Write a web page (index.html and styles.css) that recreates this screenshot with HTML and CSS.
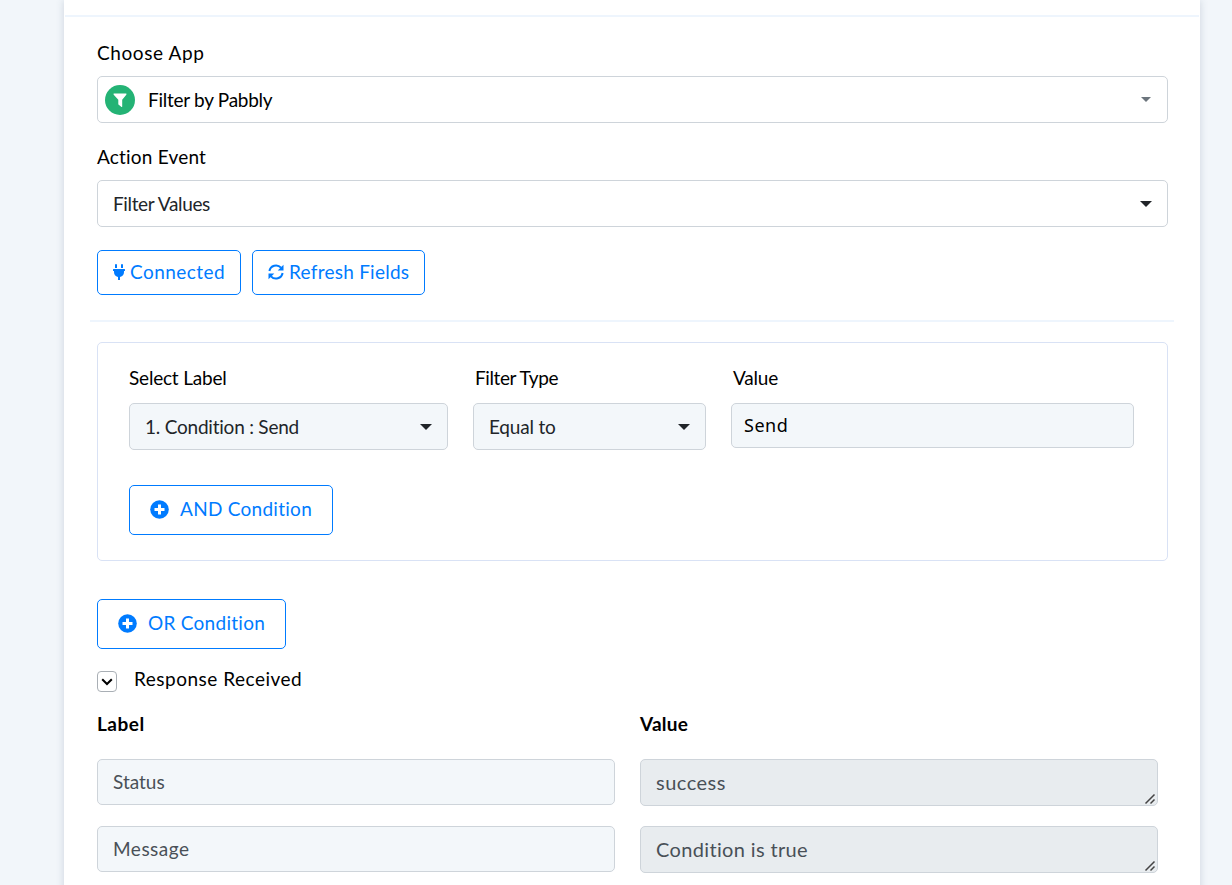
FILE: index.html
```html
<!DOCTYPE html>
<html lang="en">
<head>
    <meta charset="UTF-8">
    <meta name="viewport" content="width=device-width, initial-scale=1.0">
    <title>Filter by Pabbly</title>
    <link rel="stylesheet" href="styles.css">
</head>
<body>
    <div class="card">
        <div class="divider-top"></div>

        <div class="content">
            <div class="label label-app">Choose App</div>
            <div class="select select-app">
                <svg class="app-icon" width="30" height="30" viewBox="0 0 30 30">
                    <circle cx="15" cy="15" r="15" fill="#24b375"/>
                    <path d="M9.2 8.5h11.6q1.3 0 .5 1.2l-4.100 5v6.700q-.1 1-1 .3l-2.500-1.900q-.4-.3-.4-.9v-4.200l-4.600-5q-.8-1.200.5-1.200z" fill="#fff"/>
                </svg>
                <span class="text t-app">Filter by Pabbly</span>
                <span class="caret caret-small"></span>
            </div>

            <div class="label label-event">Action Event</div>
            <div class="select">
                <span class="text t-values">Filter Values</span>
                <span class="caret"></span>
            </div>

            <div class="buttons">
                <button class="btn btn-connected">
                    <svg width="12" height="16" viewBox="0 0 384 512" fill="currentColor">
                        <path d="M320 32a32 32 0 0 0-64 0v96h64zm48 128H16a16 16 0 0 0-16 16v32a16 16 0 0 0 16 16h16v32a160 160 0 0 0 128 156.800V512h64v-99.200A160 160 0 0 0 352 256v-32h16a16 16 0 0 0 16-16v-32a16 16 0 0 0-16-16zM128 32a32 32 0 0 0-64 0v96h64z"/>
                    </svg>
                    <span>Connected</span>
                </button>
                <button class="btn btn-refresh">
                    <svg width="16" height="16" viewBox="0 0 16 16" fill="none" stroke="currentColor" stroke-width="2">
                        <path d="M1.400 7A6.700 6.700 0 0 1 13 3.700M14.600 9A6.700 6.700 0 0 1 3 12.300"/>
                        <path d="M15.500.8v5.800H9.700zM.5 15.200V9.400h5.800z" fill="currentColor" stroke="none"/>
                    </svg>
                    <span>Refresh Fields</span>
                </button>
            </div>
        </div>

        <div class="divider"></div>

        <div class="content">
            <div class="filter-box">
                <div class="filter-row">
                    <div>
                        <div class="label t-select">Select Label</div>
                        <div class="select filled">
                            <span class="text t-condition">1. Condition : Send</span>
                            <span class="caret"></span>
                        </div>
                    </div>
                    <div>
                        <div class="label t-type">Filter Type</div>
                        <div class="select filled">
                            <span class="text t-equal">Equal to</span>
                            <span class="caret"></span>
                        </div>
                    </div>
                    <div>
                        <div class="label t-value">Value</div>
                        <input class="value-input" type="text" value="Send">
                    </div>
                </div>
                <button class="btn btn-add btn-and">
                    <svg width="19" height="19" viewBox="0 0 19 19">
                        <circle cx="9.500" cy="9.500" r="9.300" fill="currentColor"/>
                        <path d="M9.500 4.500v10M4.500 9.500h10" stroke="#fff" stroke-width="3"/>
                    </svg>
                    <span>AND Condition</span>
                </button>
            </div>

            <button class="btn btn-add btn-or">
                <svg width="19" height="19" viewBox="0 0 19 19">
                    <circle cx="9.500" cy="9.500" r="9.300" fill="currentColor"/>
                    <path d="M9.500 4.500v10M4.500 9.500h10" stroke="#fff" stroke-width="3"/>
                </svg>
                <span>OR Condition</span>
            </button>

            <div class="response-head">
                <span class="toggle">
                    <svg width="12" height="8" viewBox="0 0 12 8" fill="none" stroke="#000" stroke-width="2">
                        <path d="M1.200 1.200L6 6l4.800-4.800"/>
                    </svg>
                </span>
                <span class="response-title">Response Received</span>
            </div>

            <div class="response">
                <div class="heading h-label">Label</div>
                <div class="heading h-value">Value</div>
                <div class="field t-status">Status</div>
                <div class="area t-success">success<svg class="grip" width="12" height="12" viewBox="0 0 12 12" stroke="#444"><path d="M1.500 10.500l9-9M6.500 10.500l4-4" stroke-width="1.500"/></svg></div>
                <div class="field t-message">Message</div>
                <div class="area t-true">Condition is true<svg class="grip" width="12" height="12" viewBox="0 0 12 12" stroke="#444"><path d="M1.500 10.500l9-9M6.500 10.500l4-4" stroke-width="1.500"/></svg></div>
            </div>
        </div>
    </div>
</body>
</html>
```
FILE: styles.css
```css
* {
    box-sizing: border-box;
}
body {
    margin: 0;
    height: 885px;
    overflow: hidden;
    background-color: #f2f6fa;
    font-family: Lato, "Liberation Sans", sans-serif;
    font-size: 19px;
    font-variant-ligatures: none;
    color: #000;
}
.card {
    width: 1136px;
    height: 900px;
    margin-left: 64px;
    padding-top: 15px;
    background-color: #fff;
    box-shadow: 0 0 8px rgba(60, 80, 110, 0.2);
}
.divider-top {
    height: 2px;
    margin: 0 1px;
    background-color: #eef5fd;
}
.divider {
    height: 2px;
    margin: 25px 26px 20px;
    background-color: #eef5fd;
}
.content {
    padding: 0 32px 0 33px;
}
.label {
    line-height: 24px;
    white-space: nowrap;
}
.label-app {
    padding-top: 24px;
    margin-bottom: 11px;
    letter-spacing: 0.6px;
}
.label-event {
    margin-top: 22px;
    margin-bottom: 11px;
    letter-spacing: 0.2px;
}
.select {
    display: flex;
    align-items: center;
    justify-content: space-between;
    height: 47px;
    padding: 0 15px;
    border: 1px solid #ced4da;
    border-radius: 5px;
    color: #212529;
    white-space: nowrap;
}
.select-app {
    padding: 0 16px 0 7px;
    color: #000;
}
.select-app .text {
    flex: 1;
    margin-left: 13px;
}
.caret {
    border: 6px solid transparent;
    border-top-color: #212529;
    border-bottom: 0;
}
.caret-small {
    border-width: 5px 5px 0;
    border-top-color: #6c757d;
}
.t-app {
    letter-spacing: -0.27px;
}
.t-values {
    letter-spacing: -0.35px;
}
.t-select {
    letter-spacing: -0.2px;
}
.t-type {
    padding-left: 2px;
    letter-spacing: -0.4px;
}
.t-value {
    padding-left: 2px;
    letter-spacing: -0.2px;
}
.t-condition {
    letter-spacing: -0.22px;
}
.t-equal {
    letter-spacing: -0.2px;
}
.filled {
    background-color: #f3f7fa;
}
.buttons {
    display: flex;
    gap: 11px;
    margin-top: 23px;
}
.btn {
    display: flex;
    align-items: center;
    height: 45px;
    padding: 0 0 1px 15px;
    border: 1px solid #007bff;
    border-radius: 5px;
    background-color: #fff;
    color: #007bff;
    font: inherit;
    font-variant-ligatures: none;
    white-space: nowrap;
}
.btn span {
    margin-top: -2px;
}
.btn-connected {
    width: 144px;
    gap: 5px;
    letter-spacing: 0.45px;
}
.btn-refresh {
    width: 173px;
    gap: 5px;
    letter-spacing: 0.25px;
}
.filter-box {
    height: 219px;
    padding: 23px 33px 0 31px;
    border: 1px solid #d9e2f5;
    border-radius: 5px;
}
.filter-row {
    display: grid;
    grid-template-columns: 319px 233px 403px;
    column-gap: 25px;
}
.filter-row .label {
    margin-bottom: 13px;
}
.value-input {
    display: block;
    width: 100%;
    height: 45px;
    padding: 0 12px 2px;
    border: 1px solid #ced4da;
    border-radius: 5px;
    background-color: #f3f7fa;
    font-family: "Noto Sans", sans-serif;
    font-size: 18px;
    letter-spacing: 0.5px;
}
.btn-add {
    height: 50px;
    padding: 0 0 2px 20px;
    gap: 11px;
    letter-spacing: 0.27px;
}
.btn-and {
    width: 204px;
    margin-top: 35px;
}
.btn-or {
    width: 189px;
    margin-top: 38px;
}
.response-head {
    display: flex;
    height: 43px;
    padding-top: 22px;
}
.toggle {
    display: flex;
    align-items: center;
    justify-content: center;
    width: 20px;
    height: 21px;
    border: 1px solid #a9afb5;
    border-radius: 4px;
}
.response-title {
    margin-left: 17px;
    margin-top: -4px;
    line-height: 24px;
    letter-spacing: 0.5px;
}
.response {
    display: grid;
    grid-template-columns: 518px 518px;
    column-gap: 25px;
    row-gap: 20px;
    margin-top: 20px;
    align-items: start;
}
.heading {
    height: 27px;
    line-height: 24px;
    font-weight: 700;
}
.h-label {
    letter-spacing: 0.5px;
}
.h-value {
    letter-spacing: 0.2px;
}
.field, .area {
    height: 46px;
    padding-left: 15px;
    border: 1px solid #ced4da;
    border-radius: 5px;
    background-color: #f3f7fa;
    color: #495057;
    line-height: 44px;
}
.t-message {
    letter-spacing: 0.5px;
}
.area {
    position: relative;
    height: 47px;
    background-color: #e8ecef;
    font-size: 20px;
    line-height: 44px;
    letter-spacing: 0.35px;
}
.t-success {
    letter-spacing: 0.5px;
}
.grip {
    position: absolute;
    right: 1px;
    bottom: 0;
}
```
